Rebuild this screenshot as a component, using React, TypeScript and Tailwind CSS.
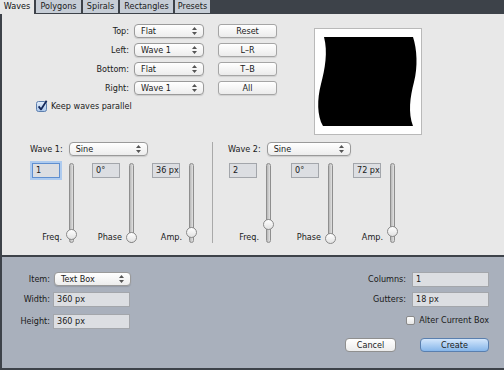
import React from "react";

const Arrows = () => (
  <svg width="5" height="8" viewBox="0 0 5 8" className="shrink-0">
    <path d="M2.5 0 L5 3 H0 Z M0 5 H5 L2.5 8 Z" fill="#555" />
  </svg>
);

function Select({ label, className }: { label: string; className: string }) {
  return (
    <div
      className={`flex h-[14px] items-center justify-between rounded-[4px] border border-[#9a9a9a] bg-linear-to-b from-white to-[#ededed] pl-[6px] pr-[6px] shadow-[0_1px_1px_rgba(0,0,0,0.12)] ${className}`}
    >
      <span className="leading-none">{label}</span>
      <Arrows />
    </div>
  );
}

function Btn({ label }: { label: string }) {
  return (
    <div className="flex h-[14px] w-[59px] items-center justify-center rounded-[3px] border border-[#a5a5a5] bg-linear-to-b from-white to-[#ebebeb] leading-none shadow-[0_1px_1px_rgba(0,0,0,0.1)]">
      {label}
    </div>
  );
}

function Field({ value, focus, className }: { value: string; focus?: boolean; className: string }) {
  return (
    <div
      className={`flex items-center overflow-hidden whitespace-nowrap border bg-[#dcdee2] pl-[3px] leading-none ${
        focus ? "border-[#5f8fd0] shadow-[0_0_0_2px_#aecbef]" : "border-[#a3a6ab]"
      } ${className}`}
    >
      {value}
    </div>
  );
}

function Slider({ thumb }: { thumb: string }) {
  return (
    <div className="relative h-[80px] w-[5px] rounded-full border border-[#8e8e8e] bg-linear-to-r from-[#b8b8b8] to-[#e2e2e2]">
      <div
        className={`absolute left-[-4px] h-[11px] w-[11px] rounded-full border border-[#8a8a8a] bg-linear-to-b from-white to-[#e2e2e2] ${thumb}`}
      />
    </div>
  );
}

function Unit({ value, label, thumb, focus }: { value: string; label: string; thumb: string; focus?: boolean }) {
  return (
    <div className="flex h-[80px]">
      <div className="flex w-[37px] flex-col justify-between">
        <Field value={value} focus={focus} className="h-[15px] w-[28px]" />
        <span className="pr-[7px] text-right leading-[11px]">{label}</span>
      </div>
      <Slider thumb={thumb} />
    </div>
  );
}

const CheckedBox = () => (
  <svg width="12" height="12" viewBox="0 0 12 12" className="shrink-0">
    <defs>
      <linearGradient id="cbg" x1="0" y1="0" x2="0" y2="1">
        <stop offset="0" stopColor="#e4eefa" />
        <stop offset="1" stopColor="#a9c6ea" />
      </linearGradient>
    </defs>
    <rect x="0.5" y="1.5" width="10" height="10" rx="2" fill="url(#cbg)" stroke="#5d7fae" />
    <path d="M2.6 6.4 L5 9.4 L10.6 0.8" stroke="#14285a" strokeWidth="1.8" fill="none" strokeLinejoin="round" />
  </svg>
);

const TopRow = ({ label, value, btn }: { label: string; value: string; btn: string }) => (
  <div className="flex items-center">
    <span className="w-[127px] text-right leading-none">{label}</span>
    <Select label={value} className="ml-[5px] w-[70px]" />
    <div className="ml-[14px]">
      <Btn label={btn} />
    </div>
  </div>
);

export default function App() {
  const tabs = ["Polygons", "Spirals", "Rectangles", "Presets"];
  const tabW = ["w-[45px]", "w-[35px]", "w-[53px]", "w-[35px]"];
  return (
    <div className="flex h-[370px] w-[504px] flex-col overflow-hidden bg-[#3d4249] font-['DejaVu_Sans_Condensed','DejaVu_Sans',sans-serif] text-[9px] text-[#1a1a1a]">
      {/* tab bar */}
      <div className="flex h-[14px] items-start gap-[2px] bg-[#3d4249]">
        <div className="flex h-[14px] w-[34px] items-center justify-center bg-[#e8e8e8] text-[#111]">Waves</div>
        {tabs.map((t, i) => (
          <div key={t} className={`flex h-[13px] items-center justify-center bg-[#c6cdd6] ${tabW[i]}`}>
            {t}
          </div>
        ))}
      </div>

      {/* main panel */}
      <div className="flex flex-1 flex-col border-l-2 border-[#3d4249] bg-[#e8e8e8] pt-[10px]">
        <div className="flex">
          <div className="flex flex-col">
            <div className="flex flex-col gap-[5px]">
              <TopRow label="Top:" value="Flat" btn="Reset" />
              <TopRow label="Left:" value="Wave 1" btn="L–R" />
              <TopRow label="Bottom:" value="Flat" btn="T–B" />
              <TopRow label="Right:" value="Wave 1" btn="All" />
            </div>
            <div className="ml-[34px] mt-[5px] flex items-center gap-[3px]">
              <CheckedBox />
              <span className="leading-none">Keep waves parallel</span>
            </div>
          </div>
          <div className="ml-[37px] mt-[4px] h-[107px] w-[108px] border border-[#b9b9b9] bg-white">
            <svg width="106" height="105" viewBox="0 0 106 105">
              <path
                d="M9 8 L98 8 C102 20 103 38 99 53 C95 68 93 84 98 97 L8 97 C2 87 2 70 6 55 C10 40 13 23 9 8 Z"
                fill="#000"
              />
            </svg>
          </div>
        </div>

        {/* waves */}
        <div className="mt-[7px] flex">
          <div className="ml-[28px] flex w-[182px] flex-col">
            <div className="flex items-center">
              <span className="leading-none">Wave 1:</span>
              <Select label="Sine" className="ml-[6px] w-[79px]" />
            </div>
            <div className="ml-[2px] mt-[7px] flex gap-[18px]">
              <Unit value="1" label="Freq." thumb="top-[65px]" focus />
              <Unit value="0°" label="Phase" thumb="top-[68px]" />
              <Unit value="36 px" label="Amp." thumb="top-[63px]" />
            </div>
          </div>
          <div className="w-px bg-[#a9a9a9]" />
          <div className="ml-[15px] flex flex-col">
            <div className="flex items-center">
              <span className="leading-none">Wave 2:</span>
              <Select label="Sine" className="ml-[6px] w-[84px]" />
            </div>
            <div className="ml-[1px] mt-[7px] flex gap-[20px]">
              <Unit value="2" label="Freq." thumb="top-[55px]" />
              <Unit value="0°" label="Phase" thumb="top-[69px]" />
              <Unit value="72 px" label="Amp." thumb="top-[62px]" />
            </div>
          </div>
        </div>
      </div>

      {/* bottom panel */}
      <div className="flex h-[115px] justify-between border-l-2 border-t-2 border-b-2 border-[#3d4249] bg-[#a9b0bc] pt-[15px]">
        <div className="flex flex-col gap-[6px]">
          <div className="flex items-center">
            <span className="w-[48px] text-right leading-none">Item:</span>
            <Select label="Text Box" className="ml-[4px] w-[77px]" />
          </div>
          <div className="flex items-center">
            <span className="w-[48px] text-right leading-none">Width:</span>
            <Field value="360 px" className="ml-[3px] h-[15px] w-[77px]" />
          </div>
          <div className="mt-[1px] flex items-center">
            <span className="w-[48px] text-right leading-none">Height:</span>
            <Field value="360 px" className="ml-[3px] h-[15px] w-[77px]" />
          </div>
        </div>
        <div className="mr-[15px] flex flex-col items-end">
          <div className="flex items-center">
            <span className="leading-none">Columns:</span>
            <Field value="1" className="ml-[6px] h-[15px] w-[77px]" />
          </div>
          <div className="mt-[5px] flex items-center">
            <span className="leading-none">Gutters:</span>
            <Field value="18 px" className="ml-[6px] h-[15px] w-[77px]" />
          </div>
          <div className="mt-[9px] flex items-center gap-[4px]">
            <div className="h-[9px] w-[9px] rounded-[2px] border border-[#8a8a8a] bg-linear-to-b from-white to-[#e6e6e6]" />
            <span className="leading-none">Alter Current Box</span>
          </div>
          <div className="mt-[13px] flex gap-[24px]">
            <div className="flex h-[14px] w-[51px] items-center justify-center rounded-[4px] border border-[#8f8f8f] bg-linear-to-b from-white to-[#ececec] leading-none">
              Cancel
            </div>
            <div className="flex h-[14px] w-[69px] items-center justify-center rounded-[4px] border border-[#5a7fae] bg-linear-to-b from-[#d3e6fb] to-[#86b6ea] leading-none">
              Create
            </div>
          </div>
        </div>
      </div>
    </div>
  );
}
